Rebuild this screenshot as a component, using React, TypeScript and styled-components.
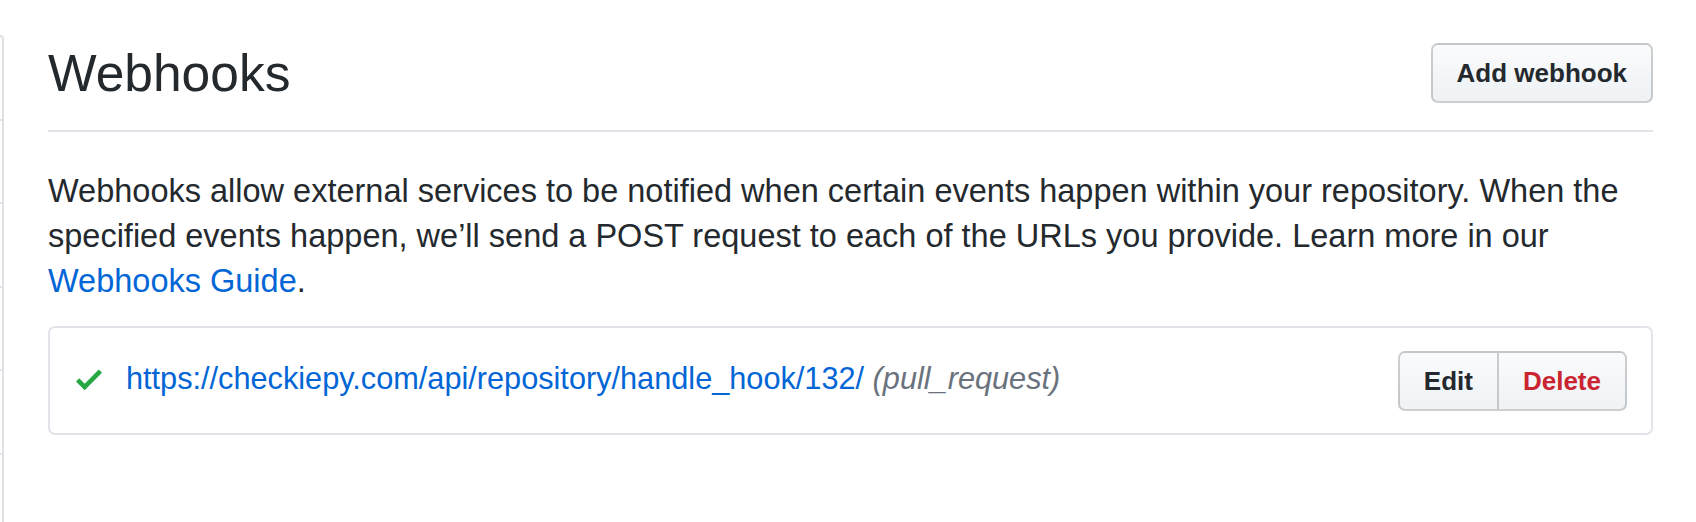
import React from 'react';
import styled, { createGlobalStyle } from 'styled-components';

const Global = createGlobalStyle`
  html, body { margin: 0; padding: 0; background: #ffffff; }
  body {
    font-family: "Liberation Sans", Arial, sans-serif;
    color: #24292e;
    -webkit-font-smoothing: antialiased;
  }
`;

const Layout = styled.div`
  display: grid;
  grid-template-columns: 4px 1fr;
  column-gap: 44px;
  padding-right: 43px;
  height: 522px;
  overflow: hidden;
`;

const SideNav = styled.nav`
  margin-top: 35px;
  border: 2px solid #dfe2e5;
  border-left: none;
  border-bottom: none;
  border-radius: 0 7px 0 0;
  display: flex;
  flex-direction: column;
`;

const SideItem = styled.div`
  flex: none;
  height: 81.5px;
  border-bottom: 2px solid #e1e4e8;
`;

const Main = styled.main`
  padding-top: 43px;
  min-width: 0;
`;

const Subhead = styled.div`
  display: flex;
  align-items: center;
  justify-content: space-between;
  padding-bottom: 27px;
  border-bottom: 2px solid #e1e4e8;
`;

const Heading = styled.h2`
  margin: 0;
  font-size: 51.5px;
  font-weight: 400;
  line-height: 60px;
  color: #24292e;
`;

const Button = styled.button<{ $danger?: boolean }>`
  font-family: inherit;
  font-size: 26px;
  font-weight: 700;
  line-height: 34px;
  padding: 11px 24px;
  border: 2px solid rgba(27, 31, 35, 0.2);
  border-radius: 7px;
  background: linear-gradient(180deg, #fafbfc 0%, #eff3f6 90%);
  color: ${(p) => (p.$danger ? '#cb2431' : '#24292e')};
  cursor: pointer;
  white-space: nowrap;
`;

const BtnGroup = styled.div`
  display: flex;
  flex: none;

  & > ${Button}:first-child {
    border-radius: 7px 0 0 7px;
  }
  & > ${Button}:last-child {
    margin-left: -2px;
    border-radius: 0 7px 7px 0;
  }
`;

const Description = styled.p`
  margin: 37px 0 0;
  font-size: 32.5px;
  line-height: 45px;
  color: #24292e;
`;

const Link = styled.a`
  color: #0366d6;
  text-decoration: none;
`;

const HookList = styled.div`
  margin-top: 22px;
  border: 2px solid #e1e4e8;
  border-radius: 7px;
`;

const HookRow = styled.div`
  display: flex;
  align-items: center;
  justify-content: space-between;
  padding: 23px 24px 22px 26px;
`;

const HookInfo = styled.div`
  display: flex;
  align-items: center;
  gap: 24px;
  padding-bottom: 4px;
  font-size: 30.7px;
  line-height: 40px;
  white-space: nowrap;
`;

const HookUrl = styled.a`
  color: #0366d6;
  text-decoration: none;
`;

const HookEvents = styled.em`
  color: #6a737d;
`;

const CheckIcon = styled.svg`
  flex: none;
  width: 26px;
  height: 34.7px;
  fill: #28a745;
`;

export default function App() {
  return (
    <>
      <Global />
      <Layout>
        <SideNav>
          <SideItem />
          <SideItem />
          <SideItem />
          <SideItem />
          <SideItem />
          <SideItem />
        </SideNav>
        <Main>
          <Subhead>
            <Heading>Webhooks</Heading>
            <Button>Add webhook</Button>
          </Subhead>
          <Description>
            Webhooks allow external services to be notified when certain events happen within your
            repository. When the specified events happen, we’ll send a POST request to each of the
            URLs you provide. Learn more in our <Link href="#">Webhooks Guide</Link>.
          </Description>
          <HookList>
            <HookRow>
              <HookInfo>
                <CheckIcon viewBox="0 0 12 16" aria-hidden="true">
                  <path d="M12 5l-8 8-4-4 1.5-1.5L4 10l6.5-6.5L12 5z" />
                </CheckIcon>
                <span>
                  <HookUrl href="#">https://checkiepy.com/api/repository/handle_hook/132/</HookUrl>{' '}
                  <HookEvents>(pull_request)</HookEvents>
                </span>
              </HookInfo>
              <BtnGroup>
                <Button>Edit</Button>
                <Button $danger>Delete</Button>
              </BtnGroup>
            </HookRow>
          </HookList>
        </Main>
      </Layout>
    </>
  );
}
